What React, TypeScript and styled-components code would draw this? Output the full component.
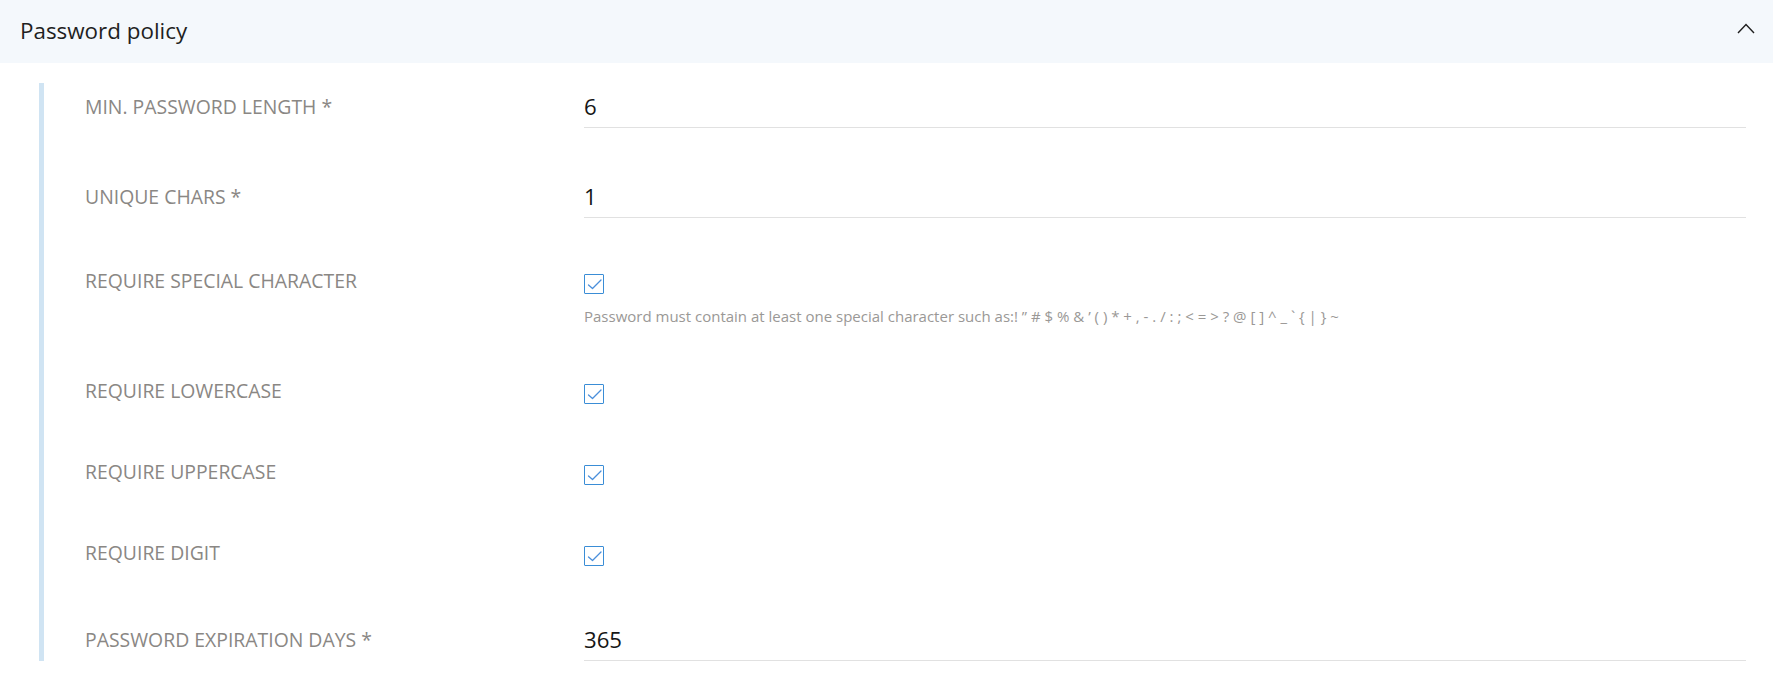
import React from "react";
import styled, { createGlobalStyle } from "styled-components";

const Global = createGlobalStyle`
  html, body { margin: 0; padding: 0; background: #ffffff; }
  body { font-family: "Open Sans", "Noto Sans", sans-serif; }
  * { box-sizing: border-box; }
`;

const Page = styled.div`
  width: 1773px;
`;

const Header = styled.div`
  height: 63px;
  display: flex;
  align-items: center;
  justify-content: space-between;
  padding: 0 18px 0 20px;
  background: #f4f8fc;
`;

const Title = styled.h2`
  margin: 0 0 2px 0;
  font-weight: 400;
  font-size: 22.4px;
  line-height: 30px;
  color: #1f1f1f;
`;

const Toggle = styled.button`
  border: 0;
  background: none;
  padding: 0;
  width: 18px;
  height: 11px;
  display: flex;
  margin-bottom: 6px;
  cursor: pointer;
`;

const Content = styled.div`
  padding: 20px 27px 39px 39px;
`;

const Form = styled.div`
  display: flex;
  flex-direction: column;
  gap: 45px;
  border-left: 5px solid #d0e4f3;
  padding-left: 41px;
`;

const Row = styled.div`
  display: flex;
  align-items: flex-start;
`;

const Label = styled.label<{ $offset: number }>`
  width: 499px;
  flex-shrink: 0;
  padding-top: ${(p) => p.$offset}px;
  font-size: 19.4px;
  line-height: 28px;
  color: #8a8784;
`;

const Field = styled.div`
  flex: 1;
  display: flex;
  flex-direction: column;
  align-items: flex-start;
`;

const ValueInput = styled.input`
  width: 100%;
  height: 45px;
  border: 0;
  border-bottom: 1px solid #e1e1e1;
  padding: 8px 0 6px 0;
  margin: 0;
  font-family: "Open Sans", "Noto Sans", sans-serif;
  font-size: 22.2px;
  line-height: 30px;
  color: #161616;
  background: transparent;
  outline: none;
`;

const CheckWrap = styled.div`
  padding: 11px 0 5px 0;
  display: flex;
`;

const Box = styled.span`
  width: 20px;
  height: 20px;
  border: 1.5px solid #3a8dd6;
  border-radius: 1px;
  display: flex;
  align-items: center;
  justify-content: center;
  background: #fff;
`;

const Help = styled.div`
  margin-top: 6px;
  font-size: 15px;
  line-height: 23px;
  color: #9a9896;
`;

const Chevron = () => (
  <svg width="18" height="11" viewBox="0 0 18 11" fill="none">
    <polyline points="1,10 9,1.6 17,10" stroke="#1f1f1f" strokeWidth="1.4" />
  </svg>
);

const Check = () => (
  <Box>
    <svg width="17" height="17" viewBox="0 0 17 17" fill="none">
      <polyline
        points="2.5,9 6.5,12.5 15,4"
        stroke="#4a8fdb"
        strokeWidth="1.3"
        strokeLinecap="round"
        strokeLinejoin="round"
      />
    </svg>
  </Box>
);

type Item =
  | { kind: "input"; label: string; value: string }
  | { kind: "check"; label: string; help?: string };

const items: Item[] = [
  { kind: "input", label: "MIN. PASSWORD LENGTH *", value: "6" },
  { kind: "input", label: "UNIQUE CHARS *", value: "1" },
  {
    kind: "check",
    label: "REQUIRE SPECIAL CHARACTER",
    help:
      "Password must contain at least one special character such as:! \u201D # $ % & \u2019 ( ) * + , - . / : ; < = > ? @ [ ] ^ _ ` { | } ~",
  },
  { kind: "check", label: "REQUIRE LOWERCASE" },
  { kind: "check", label: "REQUIRE UPPERCASE" },
  { kind: "check", label: "REQUIRE DIGIT" },
  { kind: "input", label: "PASSWORD EXPIRATION DAYS *", value: "365" },
];

export default function App() {
  return (
    <Page>
      <Global />
      <Header>
        <Title>Password policy</Title>
        <Toggle aria-label="Collapse">
          <Chevron />
        </Toggle>
      </Header>
      <Content>
        <Form>
          {items.map((it) =>
            it.kind === "input" ? (
              <Row key={it.label}>
                <Label $offset={10}>{it.label}</Label>
                <Field>
                  <ValueInput defaultValue={it.value} readOnly />
                </Field>
              </Row>
            ) : (
              <Row key={it.label}>
                <Label $offset={4}>{it.label}</Label>
                <Field>
                  <CheckWrap>
                    <Check />
                  </CheckWrap>
                  {it.help && <Help>{it.help}</Help>}
                </Field>
              </Row>
            )
          )}
        </Form>
      </Content>
    </Page>
  );
}
